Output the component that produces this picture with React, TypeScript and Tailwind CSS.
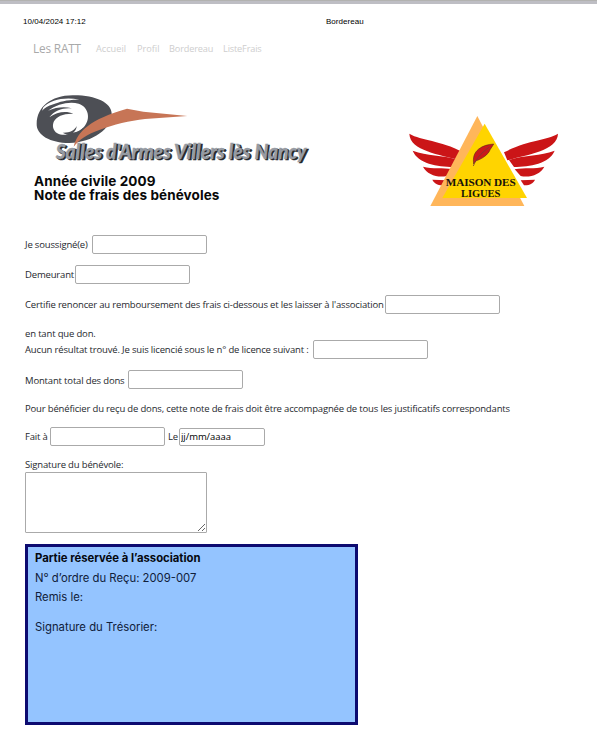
import type { ReactNode } from "react";

function ClubLogo() {
  return (
    <svg className="block h-[83px] w-[300px] overflow-visible" viewBox="0 0 900 249" aria-label="Salles d'Armes Villers lès Nancy">
      <path d="M50 102C51 50 92 17 158 16C226 15 274 38 275 70C276 115 219 158 148 159C91 159 49 135 50 102Z" fill="#4d4f55" />
      <path d="M70 52C92 30 132 20 178 29C144 28 118 35 100 43C84 48 74 54 66 62Z" fill="#fff" />
      <path
        d="M84 62C112 42 148 33 176 41C208 52 211 88 194 108C184 122 166 129 150 130C144 135 124 137 112 130C98 122 96 106 102 94C110 79 130 70 160 71C140 62 112 64 88 82C104 60 130 52 156 55C132 49 108 52 84 62Z"
        fill="#fff"
      />
      <path d="M128 128C148 129 164 121 170 108C170 117 165 124 159 128C174 127 184 120 192 110C182 132 153 142 128 128Z" fill="#4d4f55" />
      <path d="M161 170C172 124 211 87 321 56L370 65L502 78L375 87C329 92 281 104 238 120C199 134 178 149 161 170Z" fill="#c77556" />
      <g fontFamily="Lato, 'Liberation Sans', sans-serif" fontSize="62" fontWeight="900" fontStyle="italic">
        <text x="112" y="211" textLength="752" lengthAdjust="spacingAndGlyphs" fill="#25272b" stroke="#25272b" strokeWidth="2">
          Salles d'Armes Villers lès Nancy
        </text>
        <text x="107" y="206" textLength="752" lengthAdjust="spacingAndGlyphs" fill="#969ba3" stroke="#969ba3" strokeWidth="1">
          Salles d'Armes Villers lès Nancy
        </text>
      </g>
    </svg>
  );
}

function Wing() {
  return (
    <g fill="#cb1517">
      <path d="M28 86C66 108 118 104 190 142L180 166C120 148 30 138 28 86Z" />
      <path d="M38 137C82 154 125 148 175 165L160 186C112 185 54 176 38 137Z" />
      <path d="M69 185C98 193 128 186 158 193L140 213C112 219 81 208 69 185Z" />
      <path d="M97 224L140 226L130 241C113 242 102 234 97 224Z" />
    </g>
  );
}

function LeagueLogo() {
  return (
    <svg className="block h-[110px] w-[170px]" viewBox="0 0 510 330" aria-label="Maison des Ligues">
      <Wing />
      <g transform="translate(502 0) scale(-1 1)">
        <Wing />
      </g>
      <path d="M232 33L373 303H91Z" fill="#ffb65a" />
      <path d="M254 56L381 279H127Z" fill="#ffd400" />
      <path d="M221 177C218 156 223 143 236 132C249 122 264 118 281 117C276 127 271 131 267 141C257 155 242 163 227 168Z" fill="#c9191b" stroke="#44201b" strokeWidth="1.5" />
      <path d="M220 183C228 162 241 146 268 126" fill="none" stroke="#7a3a32" strokeWidth="2.5" />
      <g fontFamily="'Liberation Serif', serif" fontSize="34" fontWeight="700" fill="#17120a">
        <text x="137" y="243" textLength="210" lengthAdjust="spacingAndGlyphs">MAISON DES</text>
        <text x="183" y="277" textLength="118" lengthAdjust="spacingAndGlyphs">LIGUES</text>
      </g>
    </svg>
  );
}

function Row({ children, className }: { children: ReactNode; className: string }) {
  return <div className={`flex h-[19px] items-center whitespace-nowrap ${className}`}>{children}</div>;
}

function Field() {
  return <input type="text" className="h-[19px] w-[115px] shrink-0 rounded-[2px] border border-[#aaaaaa] bg-white px-1 outline-none" />;
}

export default function App() {
  return (
    <main className="h-[736px] w-[597px] overflow-hidden bg-white font-['Open_Sans','Noto_Sans',sans-serif] text-[9.5px] tracking-[-0.165px] text-[#26292e]">
      <div className="h-1 border-t border-[#b2b2b0] bg-[#bebec4]" />
      <header className="flex h-9 items-center pl-[23px] font-['Liberation_Sans',sans-serif] text-[8px] tracking-[0.03px] text-black">
        <span className="w-[303px]">10/04/2024 17:12</span>
        <span>Bordereau</span>
      </header>
      <nav className="flex h-[18px] items-center whitespace-nowrap pl-[33px] text-[9.2px] text-[#cecece]">
        <span className="w-[63px] text-[11.8px] text-[#a9a9a9]">Les RATT</span>
        <span className="w-[41px] tracking-[0px]">Accueil</span>
        <span className="w-[32px] tracking-[0px]">Profil</span>
        <span className="w-[54px]">Bordereau</span>
        <span>ListeFrais</span>
      </nav>

      <section className="flex h-[177px] pl-5 pt-[32px]">
        <div className="w-[380px]">
          <ClubLogo />
          <h1 className="pl-[14px] pt-[1px] font-['Inter',sans-serif] text-[13.5px] font-bold leading-[14px] tracking-[0.1px] text-[#090909]">
            Année civile 2009
            <br />
            Note de frais des bénévoles
          </h1>
        </div>
        <div className="pt-[15px]">
          <LeagueLogo />
        </div>
      </section>

      <form className="pl-[25px]">
        <Row className=""><label className="w-[67px] shrink-0 pt-px">Je soussigné(e)</label><Field /></Row>
        <Row className="mt-[11px]"><label className="w-[50px] shrink-0 pt-px">Demeurant</label><Field /></Row>
        <Row className="mt-[11px]"><label className="w-[360px] shrink-0 pt-px">Certifie renoncer au remboursement des frais ci-dessous et les laisser à l'association</label><Field /></Row>
        <p className="mt-[13px] h-[13px] leading-[13px]">en tant que don.</p>
        <Row className=""><label className="w-[288px] shrink-0 pt-[2px]">Aucun résultat trouvé. Je suis licencié sous le n° de licence suivant :</label><Field /></Row>
        <Row className="mt-[11px]"><label className="w-[103px] shrink-0 pt-[3px]">Montant total des dons</label><Field /></Row>
        <p className="mt-[13px] h-[13px] whitespace-nowrap leading-[14px]">Pour bénéficier du reçu de dons, cette note de frais doit être accompagnée de tous les justificatifs correspondants</p>
        <Row className="mt-[12px]">
          <label className="w-[25px] shrink-0 pt-[2px]">Fait à</label><Field />
          <label className="w-[14px] shrink-0 pl-[3px] pt-[2px]">Le</label>
          <input type="text" defaultValue="jj/mm/aaaa" className="h-[18px] w-[86px] rounded-[2px] border border-[#aaaaaa] bg-white px-px tracking-[-0.05px] text-black outline-none" />
        </Row>
        <label className="mt-3 block h-[14px] leading-[14px]">Signature du bénévole:</label>
        <textarea className="block h-[61px] w-[182px] resize rounded-[1px] border border-[#aaaaaa] bg-white outline-none" />
      </form>

      <section className="ml-[25px] mt-[11px] h-[181px] w-[333px] border-[3px] border-[#0d0b70] bg-[#94c4ff] pl-[7px] pt-px font-['Inter',sans-serif] text-[11.3px] tracking-normal text-[#10203a]">
        <h2 className="h-5 font-bold leading-5 text-[#05080f]">Partie réservée à l’association</h2>
        <p className="h-5 leading-[21px]">N° d’ordre du Reçu: 2009-007</p>
        <p className="h-[30px] leading-[19px]">Remis le:</p>
        <p className="leading-[19px]">Signature du Trésorier:</p>
      </section>
    </main>
  );
}
